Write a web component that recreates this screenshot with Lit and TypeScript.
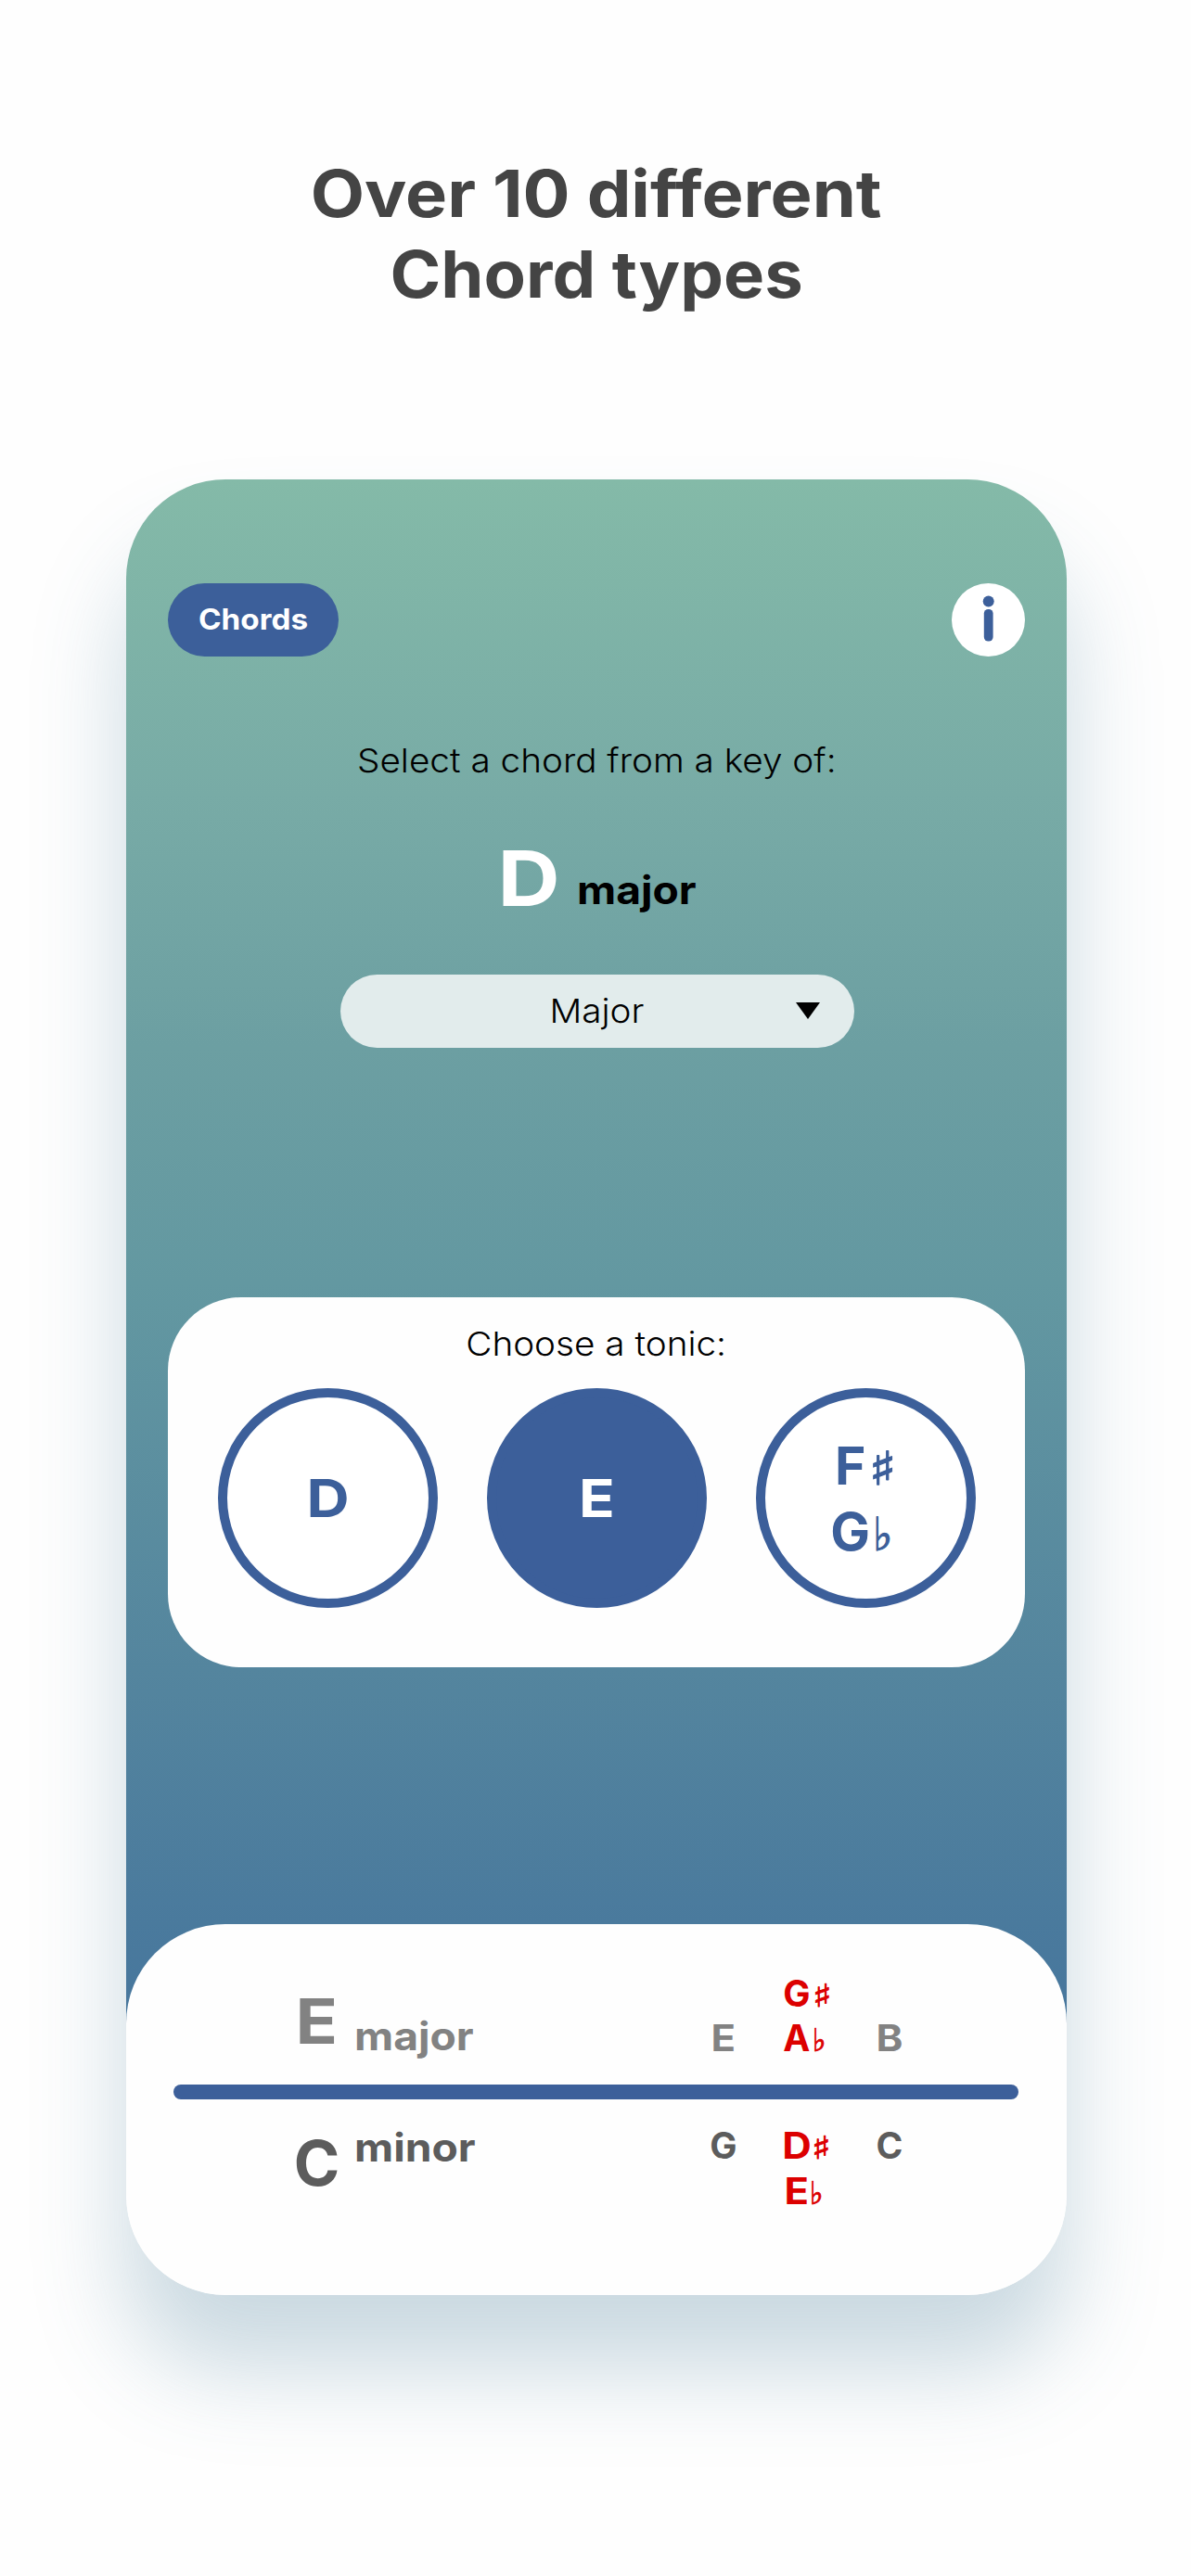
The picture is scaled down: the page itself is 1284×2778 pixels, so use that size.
import { LitElement, html, css, nothing } from "lit";
import { customElement, property, state } from "lit/decorators.js";
import { classMap } from "lit/directives/class-map.js";

type Accidental = "sharp" | "flat" | "";

interface Pitch {
  letter: string;
  accidental?: Accidental;
}

interface ChordNote {
  spellings: Pitch[];
  highlighted?: boolean;
}

const WIDE_LETTERS = "BDE";

@customElement("pitch-name")
export class PitchName extends LitElement {
  @property() letter = "";
  @property() accidental: Accidental = "";

  static styles = css`
    :host {
      display: block;
      white-space: nowrap;
    }
    .letter {
      display: inline-block;
    }
    .wide {
      transform: scaleX(1.12);
    }
    .accidental {
      display: inline-block;
      width: 0.46em;
      margin-left: 0.065em;
      font-family: "DejaVu Sans", sans-serif;
      font-size: 0.87em;
      font-weight: 400;
      line-height: 1;
      transform-origin: 0 50%;
      -webkit-text-stroke: 0.026em currentColor;
    }
    .sharp {
      transform: scaleX(1.25);
    }
    .flat {
      transform: scaleX(0.9);
    }
  `;

  render() {
    const wide = WIDE_LETTERS.includes(this.letter);
    return html`<span class=${classMap({ letter: true, wide })}>${this.letter}</span
      >${this.accidental
        ? html`<span class="accidental ${this.accidental}"
            >${this.accidental === "sharp" ? "♯" : "♭"}</span
          >`
        : nothing}`;
  }
}

@customElement("tonic-button")
export class TonicButton extends LitElement {
  @property({ attribute: false }) spellings: Pitch[] = [];
  @property({ type: Boolean }) selected = false;

  static styles = css`
    :host {
      display: block;
    }
    .circle {
      box-sizing: border-box;
      width: 237px;
      height: 237px;
      display: flex;
      flex-direction: column;
      align-items: center;
      justify-content: center;
      border: 10.7px solid #3c5f9a;
      border-radius: 50%;
      background: #fff;
      color: #3c5f9a;
      font-size: 57px;
      font-weight: 700;
      line-height: 71px;
    }
    .selected {
      background: #3c5f9a;
      color: #fff;
    }
    .double {
      padding-right: 8px;
    }
    .spelling {
      height: 71px;
    }
  `;

  render() {
    return html`<div
      class=${classMap({ circle: true, selected: this.selected, double: this.spellings.length > 1 })}
    >
      ${this.spellings.map(
        (p) =>
          html`<pitch-name
            class="spelling"
            .letter=${p.letter}
            .accidental=${p.accidental ?? ""}
          ></pitch-name>`
      )}
    </div>`;
  }
}

@customElement("chord-row")
export class ChordRow extends LitElement {
  @property() root = "";
  @property() quality = "";
  @property({ attribute: false }) notes: ChordNote[] = [];
  @property() edge: "top" | "bottom" = "top";

  static styles = css`
    :host {
      display: block;
    }
    .row {
      box-sizing: border-box;
      display: flex;
      padding-left: 176px;
    }
    .top {
      height: 173px;
      align-items: flex-end;
      padding-bottom: 25px;
      color: #828282;
    }
    .bottom {
      align-items: flex-start;
      padding-top: 26.5px;
      color: #5c5c5c;
    }
    .name {
      display: flex;
      align-items: inherit;
      gap: 10px;
      width: 424px;
      font-weight: 700;
    }
    .root {
      width: 60px;
      font-size: 67px;
      line-height: 60px;
      text-align: center;
    }
    .quality {
      font-size: 42px;
      line-height: 50px;
      transform: scaleX(1.1);
      transform-origin: 0 50%;
    }
    .top .root {
      margin-bottom: 13px;
    }
    .top .quality {
      margin-bottom: 1.5px;
    }
    .bottom .root {
      margin-top: 12.5px;
    }
    .bottom .quality {
      margin-top: 1px;
    }
    .notes {
      display: grid;
      grid-template-columns: 89px 89px 91px;
      align-items: inherit;
      font-size: 39px;
      font-weight: 700;
      line-height: 48.6px;
    }
    .note {
      display: flex;
      flex-direction: column;
      align-items: center;
    }
    .spelling {
      height: 48.6px;
    }
    .highlighted {
      padding-right: 2.5px;
      color: #dc0000;
    }
  `;

  render() {
    return html`<div class="row ${this.edge}">
      <div class="name">
        <pitch-name class="root" .letter=${this.root}></pitch-name>
        <span class="quality">${this.quality}</span>
      </div>
      <div class="notes">
        ${this.notes.map(
          (n) => html`<div class=${classMap({ note: true, highlighted: !!n.highlighted })}>
            ${n.spellings.map(
              (p) =>
                html`<pitch-name
                  class="spelling"
                  .letter=${p.letter}
                  .accidental=${p.accidental ?? ""}
                ></pitch-name>`
            )}
          </div>`
        )}
      </div>
    </div>`;
  }
}

@customElement("app-root")
export class AppRoot extends LitElement {
  @state() private selectedTonic = 1;

  private readonly tonics: Pitch[][] = [
    [{ letter: "D" }],
    [{ letter: "E" }],
    [
      { letter: "F", accidental: "sharp" },
      { letter: "G", accidental: "flat" },
    ],
  ];

  private readonly majorNotes: ChordNote[] = [
    { spellings: [{ letter: "E" }] },
    {
      spellings: [
        { letter: "G", accidental: "sharp" },
        { letter: "A", accidental: "flat" },
      ],
      highlighted: true,
    },
    { spellings: [{ letter: "B" }] },
  ];

  private readonly minorNotes: ChordNote[] = [
    { spellings: [{ letter: "G" }] },
    {
      spellings: [
        { letter: "D", accidental: "sharp" },
        { letter: "E", accidental: "flat" },
      ],
      highlighted: true,
    },
    { spellings: [{ letter: "C" }] },
  ];

  static styles = css`
    :host {
      display: block;
      font-family: Inter, "Open Sans", sans-serif;
    }
    .page {
      box-sizing: border-box;
      width: 1284px;
      height: 2778px;
      overflow: hidden;
      padding-top: 166px;
      background: #fefefe;
    }
    .headline {
      display: flex;
      flex-direction: column;
      align-items: center;
      margin: 0;
      padding-left: 2px;
      color: #444;
      font-size: 70px;
      font-weight: 700;
      line-height: 86.6px;
    }
    .headline-first {
      transform: scaleX(1.082);
    }
    .headline-second {
      transform: scaleX(1.06);
    }
    .phone {
      display: flex;
      flex-direction: column;
      width: 1014px;
      height: 1958px;
      margin: 177.8px 0 0 135.5px;
      overflow: hidden;
      border-radius: 107px;
      background: #fefefe
        linear-gradient(
          #84baa8 0%,
          #78aba6 20%,
          #6c9fa2 36%,
          #6398a1 51%,
          #54859e 75.5%,
          #4a7a9d 91.6%,
          #46759d 100%
        )
        no-repeat 0 0 / 100% 1700px;
      box-shadow: 0 80px 100px rgba(68, 122, 150, 0.28);
    }
    .toolbar {
      display: flex;
      justify-content: space-between;
      align-items: center;
      padding: 111.7px 44.3px 0 45.5px;
    }
    .mode {
      display: flex;
      justify-content: center;
      width: 184.4px;
      border-radius: 40px;
      background: #3c5f9a;
      color: #fff;
      font-size: 31px;
      font-weight: 700;
      line-height: 78px;
      padding-bottom: 1px;
    }
    .mode-label {
      transform: scaleX(1.073);
    }
    .info {
      display: block;
      width: 79px;
      height: 79px;
    }
    .caption {
      align-self: center;
      color: #000;
      font-size: 36px;
      font-weight: 350;
      line-height: 50px;
      white-space: nowrap;
      transform: scaleX(1.075);
    }
    .prompt {
      margin: 87px 0 0 1px;
    }
    .key {
      display: flex;
      justify-content: center;
      align-items: flex-start;
      gap: 22px;
      height: 100px;
      margin-top: 52.3px;
      padding-right: 6px;
      font-weight: 700;
    }
    .key-root {
      color: #fff;
      font-size: 83px;
      line-height: 100px;
    }
    .key-quality {
      margin-top: 38.5px;
      color: #000;
      font-size: 42px;
      line-height: 50px;
      transform: scaleX(1.1);
      transform-origin: 0 50%;
    }
    .select {
      display: grid;
      grid-template-columns: 1fr auto 1fr;
      align-items: center;
      width: 554.5px;
      height: 79px;
      margin: 53.7px 0 0 231px;
      border-radius: 40px;
      background: #e2ecec;
    }
    .select-value {
      grid-column: 2;
    }
    .caret {
      display: block;
      justify-self: end;
      width: 26px;
      height: 18px;
      margin-right: 37px;
    }
    .tonics {
      box-sizing: border-box;
      display: flex;
      flex-direction: column;
      width: 924px;
      height: 399px;
      margin: 269px 0 0 45.5px;
      padding-top: 25px;
      border-radius: 79px;
      background: #fefefe;
    }
    .tonic-list {
      display: flex;
      justify-content: center;
      gap: 53px;
      margin-top: 23.8px;
      padding-left: 1.5px;
    }
    .result {
      width: 1014px;
      height: 400px;
      margin-top: auto;
      border-radius: 107px;
      background: #fefefe;
    }
    .divider {
      width: 911px;
      height: 16px;
      margin-left: 51.5px;
      border-radius: 8px;
      background: #3c5f9a;
    }
  `;

  render() {
    return html`<main class="page">
      <h1 class="headline">
        <span class="headline-first">Over 10 different</span>
        <span class="headline-second">Chord types</span>
      </h1>
      <section class="phone">
        <header class="toolbar">
          <div class="mode"><span class="mode-label">Chords</span></div>
          <svg class="info" viewBox="0 0 79 79" aria-label="Info">
            <circle cx="39.5" cy="39.5" r="39.5" fill="#fff" />
            <circle cx="39.7" cy="19.5" r="6" fill="#3c5f9a" />
            <rect x="34.8" y="28" width="9.8" height="34.6" rx="4.6" fill="#3c5f9a" />
          </svg>
        </header>
        <div class="caption prompt">Select a chord from a key of:</div>
        <div class="key">
          <pitch-name class="key-root" letter="D"></pitch-name>
          <span class="key-quality">major</span>
        </div>
        <div class="select">
          <span class="caption select-value">Major</span>
          <svg class="caret" viewBox="0 0 26 18"><path d="M0 0H26L13 18Z" fill="#000" /></svg>
        </div>
        <div class="tonics">
          <div class="caption">Choose a tonic:</div>
          <div class="tonic-list">
            ${this.tonics.map(
              (spellings, i) => html`<tonic-button
                .spellings=${spellings}
                .selected=${i === this.selectedTonic}
                @click=${() => (this.selectedTonic = i)}
              ></tonic-button>`
            )}
          </div>
        </div>
        <div class="result">
          <chord-row root="E" quality="major" edge="top" .notes=${this.majorNotes}></chord-row>
          <div class="divider"></div>
          <chord-row root="C" quality="minor" edge="bottom" .notes=${this.minorNotes}></chord-row>
        </div>
      </section>
    </main>`;
  }
}
